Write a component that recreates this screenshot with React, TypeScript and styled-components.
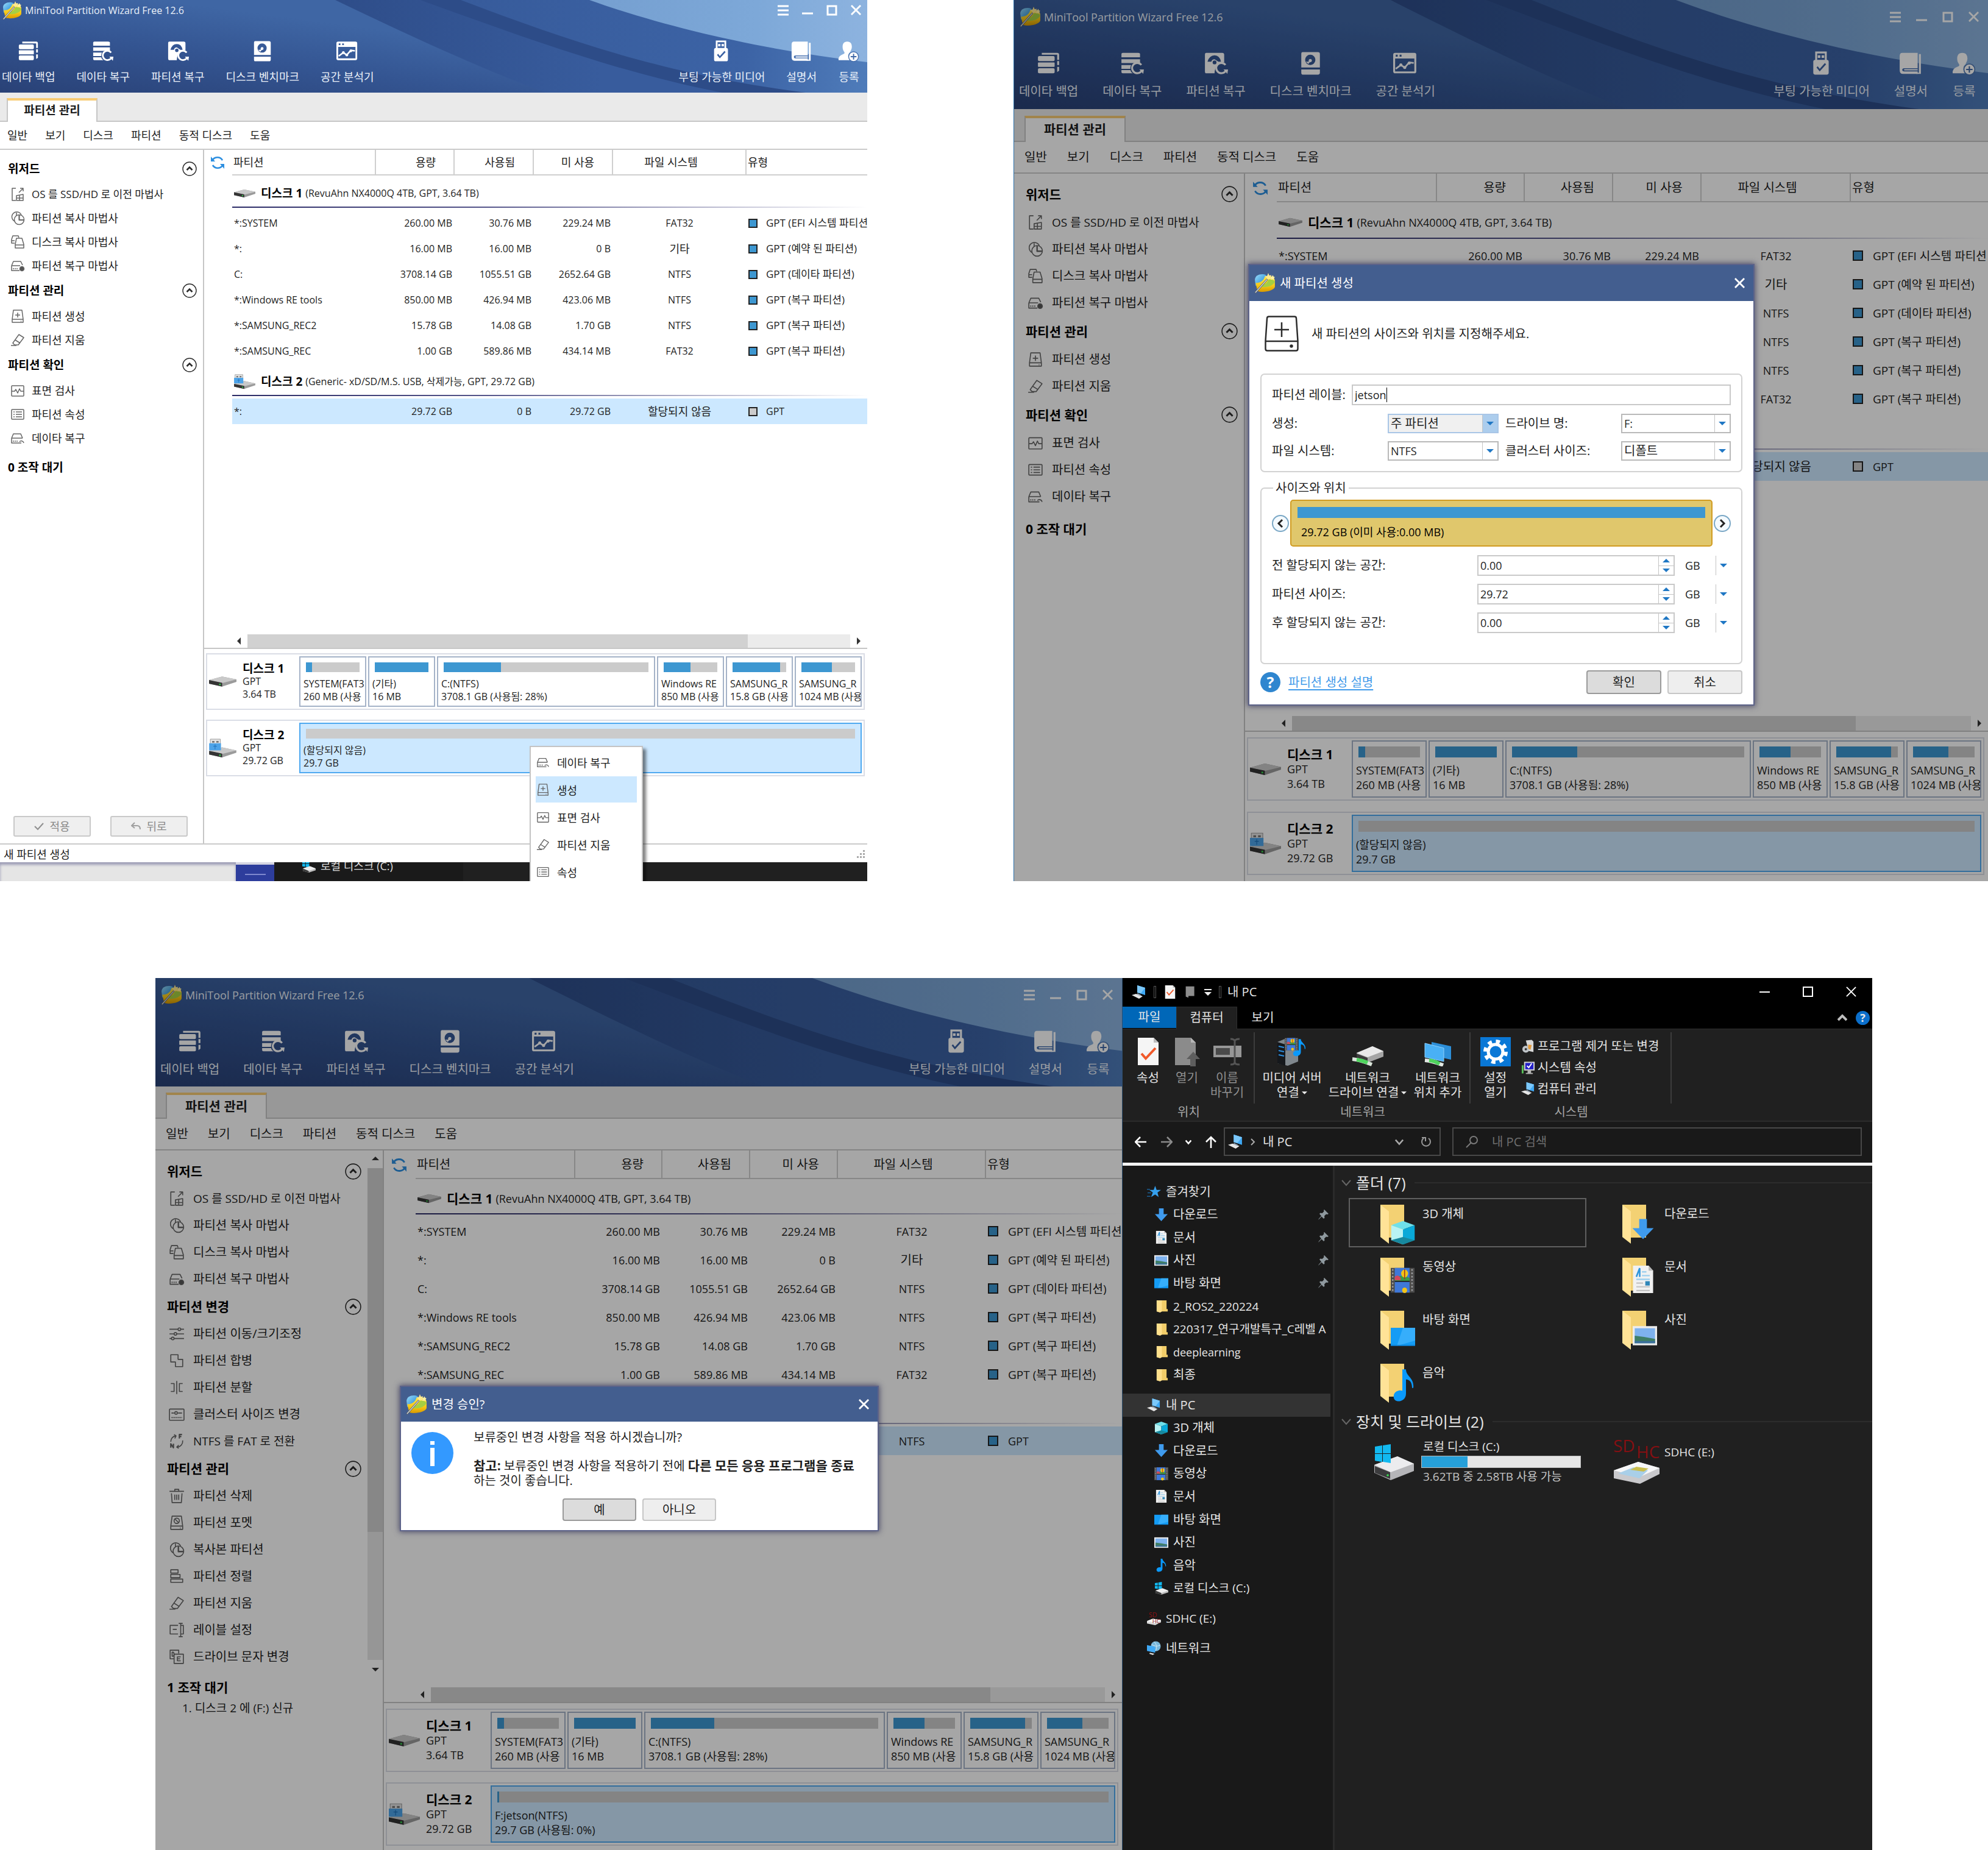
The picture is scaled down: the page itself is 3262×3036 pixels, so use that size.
import React from "react";
import styled, { createGlobalStyle, css, ThemeProvider } from "styled-components";

/* ------------------------------------------------------------------ */
/* Size scales for the partition windows                               */
/* ------------------------------------------------------------------ */

const compact = {
  latin: 16, mixed: 17, text: 18, strong: 19, line: 24,
  titleTop: 0, titleLeft: 4, titleH: 33, logo: 32, controlGap: 22, controlRight: 10,
  headerH: 152, toolsTop: 33, toolsLeft: 3, toolsRight: 12, toolIcon: 36, toolGap: 35, labelTop: 12,
  tabBarH: 48, tabH: 39, tabX: 11, tabW: 149,
  menuH: 46, menuX: 12, menuGap: 29,
  sideW: 335, sideTop: 9, headH: 44, itemH: 39, headX: 13, itemX: 17, itemIcon: 24, itemGap: 11, round: 24,
  pendingTop: 17,
  gutter: 46, thH: 42, groupH: 57, rowH: 42, driveW: 35, cols: [236, 129, 130, 130, 219], swatch: 15, swatchGap: 14,
  scrollH: 24, mapTop: 7, mapBottom: 110, mapRight: 4, mapGap: 16, boxH: 93, boxLabelW: 154, boxDrive: 45, boxLine: 21,
  cellW: 110, barH: 16,
};

const large = {
  ...compact,
  latin: 18, mixed: 19, text: 20, strong: 21, line: 26,
  titleTop: 9, titleLeft: 9, titleH: 37, logo: 35, controlGap: 25, controlRight: 15,
  headerH: 179, toolsTop: 38, toolsLeft: 8, toolsRight: 19, toolIcon: 40, toolGap: 40, labelTop: 13,
  tabBarH: 54, tabH: 43, tabX: 17, tabW: 166,
  menuH: 52, menuX: 17, menuGap: 33,
  sideW: 379, sideTop: 9, headH: 49, itemH: 44, headX: 19, itemX: 22, itemIcon: 26, itemGap: 14, round: 27,
  pendingTop: 18,
  gutter: 52, thH: 47, groupH: 64, rowH: 47, driveW: 39, cols: [263, 144, 145, 145, 245], swatch: 17, swatchGap: 16,
  scrollH: 26, mapTop: 9, mapBottom: 10, mapRight: 6, mapGap: 18, boxH: 104, boxLabelW: 173, boxDrive: 51, boxLine: 24,
  cellW: 123, barH: 18,
};

const largeScrolled = {
  ...large,
  headerH: 178, toolGap: 39, tabBarH: 53, menuGap: 32, sideW: 375, sideTop: 11, headH: 46, pendingTop: 5,
  cols: [262, 143, 144, 144, 243], groupH: 62, mapBottom: 7, mapGap: 17,
};

const Global = createGlobalStyle`
  * { box-sizing: border-box; }
  html, body { margin: 0; background: #fff; }
  body { font-family: "Open Sans", "Noto Sans CJK KR", sans-serif; color: #1e1e1e; }
  button, input, select { font: inherit; color: inherit; }
  button { padding: 0; border: 0; background: none; }
  svg { display: block; flex: none; }
`;

const Page = styled.main`
  min-height: 100vh;
  display: grid;
  grid-template-rows: minmax(0, 1446fr) minmax(0, 1431fr);
  row-gap: 159px;
  overflow: hidden;
`;
const TopRow = styled.div`
  display: grid;
  grid-template-columns: minmax(0, 1423fr) minmax(0, 1599fr);
  column-gap: 240px;
`;
const BottomRow = styled.div`
  display: grid;
  grid-template-columns: 255fr minmax(0, 1586fr) minmax(0, 1231fr) 190fr;
`;
const Shot = styled.section<{ $col?: number; $edge?: string }>`
  position: relative;
  display: flex;
  flex-direction: column;
  overflow: hidden;
  ${(p) => p.$col && css`grid-column: ${p.$col};`}
  ${(p) => p.$edge && css`border-left: 1px solid ${p.$edge};`}
`;

/* ------------------------------------------------------------------ */
/* Drawings                                                            */
/* ------------------------------------------------------------------ */

const Logo = ({ size }: { size: number }) => (
  <svg width={size} height={size} viewBox="0 0 32 32" aria-hidden="true">
    <defs>
      <linearGradient id="lgY" x1="0" y1="0" x2="0" y2="1"><stop offset="0" stopColor="#ffe34d" /><stop offset=".6" stopColor="#f6c716" /><stop offset="1" stopColor="#d99a00" /></linearGradient>
      <linearGradient id="lgB" x1="0" y1="0" x2="1" y2="1"><stop offset="0" stopColor="#9adcfb" /><stop offset="1" stopColor="#1580cf" /></linearGradient>
    </defs>
    <path d="M1 11C1 4 11 1 18 4L14 15 2 20Z" fill="url(#lgB)" />
    <path d="M2 16C9 16 14 13 16 6h9c4 1 6 4 6 7v9c-2 6-18 9-26 6Z" fill="url(#lgY)" />
    <path d="M11 19c6-1 9-4 10-8 5-1 9 1 10 3-2 6-12 9-19 8Z" fill="#a5cf42" />
    <path d="M21 1l1.500 3.500L26 4l-2 3.500 2 3-4-.8L19 12l0-3.500L16 6l3.500-1Z" fill="#ffe98f" />
    <path d="M28 4l1 2.500 2 .5-1.500 2 .3 2.500-2.300-1.200L25 11l.5-2.500L24 6.500l2.500-.3Z" fill="#fff0a0" />
    <path d="M2 30L19 11" stroke="#565b60" strokeWidth="2.600" strokeLinecap="round" />
    <path d="M2 30L19 11" stroke="#d3dade" strokeWidth="1.200" strokeLinecap="round" />
  </svg>
);

const Swoosh = styled.svg`
  position: absolute;
  inset: 0;
  width: 100%;
  height: 100%;
`;
const HeaderArt = () => (
  <Swoosh viewBox="0 0 1423 152" preserveAspectRatio="none" aria-hidden="true">
    <defs>
      <linearGradient id="hb" x1="0" y1="1" x2="1" y2=".2"><stop offset="0" stopColor="#294176" /><stop offset=".35" stopColor="#345592" /><stop offset=".6" stopColor="#3f66a4" /></linearGradient>
      <linearGradient id="hm" x1="0" y1="0" x2="1" y2="0"><stop offset="0" stopColor="#2e4d89" /><stop offset=".5" stopColor="#385c9d" /></linearGradient>
      <linearGradient id="hr" x1="0" y1="0" x2="1" y2="0"><stop offset="0" stopColor="#375b9b" /><stop offset=".7" stopColor="#3c63a5" /><stop offset="1" stopColor="#4f7cba" /></linearGradient>
      <linearGradient id="hs" x1="0" y1="0" x2="1" y2="0"><stop offset="0" stopColor="#759fd0" /><stop offset=".6" stopColor="#7da8d8" /><stop offset="1" stopColor="#8db3df" /></linearGradient>
    </defs>
    <rect width="1423" height="152" fill="url(#hb)" />
    <path d="M550 0C650 48 770 105 895 152H1423V0Z" fill="url(#hm)" />
    <path d="M690 0C850 58 1010 118 1185 152H1423V0Z" fill="#2d4c88" />
    <path d="M756 0C930 66 1090 122 1322 152H1423V0Z" fill="url(#hr)" />
    <path d="M967 0C1090 44 1250 82 1423 102V0Z" fill="url(#hs)" />
  </Swoosh>
);

const toolArt: Record<string, React.ReactNode> = {
  backup: (<g fill="#fff"><rect x="2" y="7" width="26" height="8" rx="2" /><rect x="2" y="17" width="26" height="7" rx="1" /><rect x="2" y="26" width="26" height="8" rx="2" /><path d="M8 2h24q3 0 3 3v8h-3V5H8Z" /><path d="M32 15h3v6h-3zM32 24h3v6l-3 2z" /></g>),
  restore: (<g fill="#fff"><path d="M4 2h24q3 0 3 2v5H2V4q0-2 2-2Z" /><path d="M2 12h29v6H2zM2 21h15a13 13 0 0 0-1 6H2z" /><path d="M2 29h14q1 4 4 5H4q-2 0-2-2z" /><path d="M33 21a8 8 0 1 0 1 8" fill="none" stroke="#fff" strokeWidth="3" /><path d="M30 28h7l-1 7z" /></g>),
  partition: (<g><path fill="#fff" fillRule="evenodd" d="M4 2h25q3 0 3 3v12q-14-1-15 17H4q-2 0-2-3V5q0-3 2-3ZM6 16h6q1-4 5-4l6 4h4Q25 6 17 6T6 16Zm8 1a3 3 0 1 0 6 0 3 3 0 1 0-6 0Z" /><path d="M34 21a8 8 0 1 0 1 8" fill="none" stroke="#fff" strokeWidth="3" /><path fill="#fff" d="M31 28h7l-1 7z" /></g>),
  bench: (<g><path fill="#fff" fillRule="evenodd" d="M6 1h24q3 0 3 3v21H4V4q0-3 2-3ZM18 5a8 8 0 1 0 0 16 8 8 0 1 0 0-16Z" /><path fill="#fff" d="M18 11.500a2.500 2.500 0 1 1 0 5q-1.500 0-3 3L11 16h4.500v-2.500q.5-2 2.500-2Z" /><path fill="#fff" d="M4 28h29v5q0 3-3 3H6q-2 0-2-3z" /></g>),
  space: (<g><path fill="#fff" fillRule="evenodd" d="M3 2h30q3 0 3 3v26q0 3-3 3H3q-3 0-3-3V5q0-3 3-3Zm0 9v20h30V11ZM4 5v3h3V5Zm6 0v3h3V5Z" /><path d="M4 27l8-6 6 4 7-8 7 1" fill="none" stroke="#fff" strokeWidth="2.600" /><circle cx="12" cy="21" r="2.400" fill="#fff" /><circle cx="18" cy="25" r="2.400" fill="#fff" /><circle cx="25" cy="18" r="2.400" fill="#fff" /></g>),
  media: (<g fill="#fff"><path fillRule="evenodd" d="M9 0h18v14H9Zm3 3v11h12V3Zm1 3h4v4h-4Zm6 0h4v4h-4Z" /><path fillRule="evenodd" d="M9 13h18q3 0 3 3v17q0 3-3 3H9q-3 0-3-3V16q0-3 3-3Zm2 12l5 6 10-11-2-2-8 9-3-4Z" /></g>),
  manual: (<g><path fill="#fff" fillRule="evenodd" d="M6 2h24v24H9q-3 0-3 2.500T9 31h21v4H7q-5 0-5-6V7q0-5 4-5Z" /><path fill="#fff" d="M9 27.500h21v2H9zM32 4h3v31h-7v-2h4z" /></g>),
  user: (<g><path fill="#fff" d="M16 2c6 0 8 4 8 9 0 4-2 6-3 9-3 2-4 6-3 9l2 5H1q-1-7 7-10c3-1 4-2 3-4-2-3-3-5-3-9 0-5 2-9 8-9Z" /><circle cx="27" cy="28" r="8.500" fill="#fff" stroke="#4b73b0" strokeWidth="1.500" /><path d="M27 23v10M22 28h10" stroke="#3f67a6" strokeWidth="2" /></g>),
};
const ToolIcon = ({ name, size }: { name: string; size: number }) => (
  <svg width={size} height={size} viewBox="0 0 38 37" aria-hidden="true">{toolArt[name]}</svg>
);

const lineArt: Record<string, React.ReactNode> = {
  migrate: (<><path d="M9 2H3v20h6" /><path d="M14 9l7-7M16 2h5v5" /><path d="M10 14l11-2v10H10zM15 13v9M10 18h11" /></>),
  pies: (<><path d="M7 17A8 8 0 1 1 18 7" /><path d="M10 3v5" /><circle cx="14.500" cy="14.500" r="8" /><path d="M14.500 7v8H22" strokeWidth="2.200" /></>),
  disks: (<><path d="M7 14H2V8l2-6h9l1 3" /><path d="M10 6h9l3 10v6H8v-6zM8 17h14" /><path d="M2 10h5" /></>),
  rescue: (<><path d="M2 12L5 5h12l3 6M2 12h14M2 12v8h13" /><path d="M5 16v2M8 16v2M11 16v2" /><circle cx="19" cy="17" r="3.500" fill="#555" /></>),
  create: (<><path d="M5 2h14l2 15v5H3v-5zM3 17h18" /><path d="M12 6v8M8 10h8M17 20h1" /></>),
  wipe: (<><path d="M14 3l8 5-9 12H7l-3-3z" /><path d="M8 12l8 5M1 21h9" /></>),
  surface: (<><rect x="2" y="4" width="20" height="17" rx="1" /><path d="M2 13h5l2-3 3 6 3-7 2 4h5" /></>),
  props: (<><rect x="2" y="4" width="20" height="16" rx="1" /><path d="M5 8h2M5 12h2M5 16h2M9 8h10M9 12h10M9 16h10" /></>),
  recover: (<><path d="M2 12L5 5h12l3 7M2 12h18M2 12v8h16M5 16v2M8 16v2M11 16v2" /><path d="M15 18a4 4 0 0 1 7 2" /></>),
  resize: (<><path d="M1 5h22M1 12h22M1 19h22" /><circle cx="16" cy="5" r="2" fill="#fff" /><circle cx="10" cy="12" r="2" fill="#fff" /><circle cx="6" cy="19" r="2" fill="#fff" /></>),
  merge: (<path d="M3 3h11v7h7v11H10v-7H3z" />),
  split: (<path d="M12 2v20M3 6h5v12H3M21 6h-5v12h5" />),
  cluster: (<><rect x="1" y="4" width="22" height="17" rx="1" /><path d="M4 10h4M14 10h6" /><path d="M4 17h16" strokeDasharray="2 1" /><circle cx="11" cy="10" r="2" /></>),
  convert: (<><path d="M3 13a9 9 0 0 1 7-9M8 2l3 2-2 4M21 11a9 9 0 0 1-8 10M15 18l-3 3 3 2" /><path d="M16 8V2h4M16 5h3M3 22v-6l4 6v-6" strokeWidth="2" /></>),
  trash: (<path d="M1 5h22M9 5V2h6v3M4 8l1 14h14l1-14M9 10v8M12 10v8M15 10v8" />),
  format: (<><path d="M5 2h14l2 15v5H3v-5zM3 17h18M17 20h1" /><circle cx="12" cy="9" r="4" /><path d="M9 6l6 6" /></>),
  align: (<path d="M3 2h11v5H3zM3 9h14v5H3zM3 16h18v5H3z" />),
  label: (<path d="M14 5H2v13h12M6 11h6M18 2v20M15 2h6M15 22h6M18 5h4v13h-4" />),
  letter: (<><path d="M8 15H2V2h13v5" /><path d="M8 8h14v14H8z" /><path d="M5 5v6h2q2-3 0-6zM18 12h-5v6h5M13 15h4" /></>),
};
const LineIcon = ({ name, size, color = "#666", weight = 1.5 }: { name: string; size: number; color?: string; weight?: number }) => (
  <svg width={size} height={size} viewBox="0 0 24 24" fill="none" stroke={color} strokeWidth={weight} strokeLinejoin="round" aria-hidden="true">
    {lineArt[name]}
  </svg>
);

const Drive = ({ width, usb }: { width: number; usb?: boolean }) => (
  <svg width={width} height={usb ? Math.round(width * 0.72) : Math.round(width * 0.42)} viewBox={usb ? "0 -14 46 33" : "0 0 46 19"} aria-hidden="true">
    <path d="M0 7L22 1 46 6V10L22 18 0 13Z" fill="#9b9b9b" />
    <path d="M0 7L22 1 46 6 22 12Z" fill="#c9c9c9" />
    <path d="M0 7L22 11.500V18L0 13Z" fill="#343434" />
    <rect x="17" y="13" width="2.500" height="2.500" fill="#35d04a" />
    {usb && (
      <g>
        <path d="M2-13h17v8H2z" fill="#e4e4e4" stroke="#999" />
        <path d="M5-10h4v3H5zM12-10h4v3h-4z" fill="#777" />
        <path d="M0-6h20V6H0z" fill="#4da3e8" />
        <path d="M10-4v8M7-1h6" stroke="#1d6fb8" />
      </g>
    )}
  </svg>
);

const Refresh = ({ size }: { size: number }) => (
  <svg width={size} height={size} viewBox="0 0 24 24" fill="none" stroke="#2d8fe0" strokeWidth="2.600" aria-hidden="true">
    <path d="M3 9a9.500 9.500 0 0 1 17-1M21 15a9.500 9.500 0 0 1-17 1" />
    <path d="M1 2v8h7zM23 22v-8h-7z" fill="#2d8fe0" stroke="none" />
  </svg>
);
const UpCircle = ({ size }: { size: number }) => (
  <svg width={size} height={size} viewBox="0 0 24 24" fill="none" stroke="#2b2b2b" aria-hidden="true">
    <circle cx="12" cy="12" r="11" strokeWidth="1.400" /><path d="M7.500 14L12 9.500l4.500 4.500" strokeWidth="2.600" />
  </svg>
);
const Tri = ({ dir, color = "#333", w = 12 }: { dir: "up" | "down" | "left" | "right"; color?: string; w?: number }) => {
  const d = { up: "M0 9L6 3l6 6z", down: "M0 3l6 6 6-6z", left: "M9 0L3 6l6 6z", right: "M3 0l6 6-6 6z" }[dir];
  return <svg width={w} height={w} viewBox="0 0 12 12" aria-hidden="true"><path d={d} fill={color} /></svg>;
};
const Cross = ({ size, color = "#fff", weight = 3 }: { size: number; color?: string; weight?: number }) => (
  <svg width={size} height={size} viewBox="0 0 18 18" stroke={color} strokeWidth={weight} aria-hidden="true"><path d="M1 1l16 16M17 1L1 17" /></svg>
);

/* ------------------------------------------------------------------ */
/* Partition window                                                    */
/* ------------------------------------------------------------------ */

const Window = styled.div<{ $dim?: boolean }>`
  position: relative;
  flex: 1;
  min-height: 0;
  display: flex;
  flex-direction: column;
  background: #fff;
  font-size: ${(p) => p.theme.text}px;
  line-height: ${(p) => p.theme.line}px;
  ${(p) => p.$dim && css`
    &::after { content: ""; position: absolute; inset: 0; background: rgba(0, 0, 0, 0.35); pointer-events: none; }
  `}
`;
const Header = styled.header`
  position: relative;
  height: ${(p) => p.theme.headerH}px;
  padding-top: ${(p) => p.theme.titleTop}px;
  background: #345592;
  color: #eaf0f8;
`;
const TitleRow = styled.div`
  position: relative;
  display: flex;
  align-items: center;
  gap: 5px;
  height: ${(p) => p.theme.titleH}px;
  padding: 0 ${(p) => p.theme.controlRight}px 0 ${(p) => p.theme.titleLeft}px;
`;
const AppTitle = styled.h1`
  flex: 1;
  margin: 0;
  font-size: ${(p) => p.theme.latin}px;
  font-weight: 400;
`;
const Controls = styled.div`
  display: flex;
  gap: ${(p) => p.theme.controlGap}px;
`;
const ToolRow = styled.nav`
  position: relative;
  display: flex;
  justify-content: space-between;
  padding: ${(p) => p.theme.toolsTop}px ${(p) => p.theme.toolsRight}px 0 ${(p) => p.theme.toolsLeft}px;
`;
const ToolGroup = styled.div`
  display: flex;
  gap: ${(p) => p.theme.toolGap}px;
`;
const Tool = styled.button`
  display: flex;
  flex-direction: column;
  align-items: center;
  gap: ${(p) => p.theme.labelTop}px;
  white-space: nowrap;
`;
const TabBar = styled.div`
  display: flex;
  align-items: flex-end;
  height: ${(p) => p.theme.tabBarH}px;
  padding-left: ${(p) => p.theme.tabX}px;
  background: #eaeaea;
  box-shadow: inset 0 -2px #c6c6c6;
`;
const Tab = styled.button`
  width: ${(p) => p.theme.tabW}px;
  height: ${(p) => p.theme.tabH}px;
  padding-bottom: 4px;
  border: 2px solid #c6c6c6;
  border-top: 4px solid #f8cb74;
  border-bottom: 0;
  background: #fff;
  font-size: ${(p) => p.theme.strong}px;
  font-weight: 700;
`;
const MenuBar = styled.nav`
  display: flex;
  align-items: center;
  gap: ${(p) => p.theme.menuGap}px;
  height: ${(p) => p.theme.menuH}px;
  padding-left: ${(p) => p.theme.menuX}px;
  border-bottom: 2px solid #cbcbcb;
`;
const Workspace = styled.div`
  flex: 1;
  min-height: 0;
  display: flex;
`;
const Sidebar = styled.aside`
  display: flex;
  flex-direction: column;
  width: ${(p) => p.theme.sideW}px;
  border-right: 2px solid #c6c6c6;
`;
const NavArea = styled.div`
  display: flex;
`;
const NavList = styled.div<{ $scroll?: boolean }>`
  flex: 1;
  padding: ${(p) => p.theme.sideTop}px 0 ${(p) => (p.$scroll ? 10 : 0)}px;
`;
const NavHead = styled.div`
  display: flex;
  align-items: center;
  justify-content: space-between;
  height: ${(p) => p.theme.headH}px;
  padding: 0 10px 0 ${(p) => p.theme.headX}px;
`;
const Strong = styled.h2`
  margin: 0;
  font-size: ${(p) => p.theme.strong}px;
  font-weight: 700;
  color: #000;
`;
const NavItem = styled.button<{ $mixed?: boolean }>`
  display: flex;
  align-items: center;
  gap: ${(p) => p.theme.itemGap}px;
  height: ${(p) => p.theme.itemH}px;
  padding-left: ${(p) => p.theme.itemX}px;
  font-size: ${(p) => (p.$mixed ? p.theme.mixed : p.theme.text)}px;
  white-space: nowrap;
`;
const VScroll = styled.div`
  display: flex;
  flex-direction: column;
  align-items: center;
  justify-content: space-between;
  gap: 10px;
  width: 25px;
  padding: 7px 0 5px;
`;
const VTrack = styled.div`
  flex: 1;
  width: 100%;
  background: #e6e6e6;
`;
const VThumb = styled.div`
  height: 74%;
  background: #d0d0d0;
`;
const Pending = styled.div`
  flex: 1;
  padding: ${(p) => p.theme.pendingTop}px 0 0 ${(p) => p.theme.headX}px;
`;
const PendingItem = styled.p`
  margin: 8px 0 0 25px;
  font-size: ${(p) => p.theme.mixed}px;
`;
const ActionRow = styled.div`
  display: flex;
  gap: 32px;
  padding: 0 0 11px 22px;
`;
const ActionButton = styled.button`
  display: flex;
  align-items: center;
  justify-content: center;
  gap: 9px;
  width: 127px;
  height: 34px;
  border: 2px solid #c9c9c9;
  border-radius: 3px;
  background: #efefef;
  color: #8a8a8a;
`;
const Main = styled.div`
  flex: 1;
  min-width: 0;
  display: flex;
  flex-direction: column;
`;
const TableArea = styled.div`
  flex: 1;
  display: flex;
  align-items: flex-start;
  overflow: hidden;
`;
const Gutter = styled.div`
  display: flex;
  align-items: center;
  justify-content: center;
  width: ${(p) => p.theme.gutter}px;
  height: ${(p) => p.theme.thH}px;
  padding-right: 3px;
`;
const Grid = styled.table`
  flex: 1;
  width: 0;
  table-layout: fixed;
  border-collapse: separate;
  border-spacing: 0;
  white-space: nowrap;
`;
const Th = styled.th<{ $align?: string }>`
  height: ${(p) => p.theme.thH}px;
  padding: 0 ${(p) => (p.$align ? 29 : 0)}px 0 2px;
  border-right: 2px solid #cfcfcf;
  border-bottom: 2px solid #cfcfcf;
  font-weight: 400;
  text-align: ${(p) => p.$align || "left"};
  &:last-child { border-right: 0; }
`;
const GroupCell = styled.td`
  height: ${(p) => p.theme.groupH}px;
  padding: 0 0 4px;
`;
const GroupTitle = styled.div`
  display: flex;
  align-items: center;
  gap: 5px;
  height: ${(p) => p.theme.groupH - 4}px;
  padding: 7px 0 0 3px;
  border-bottom: 2px solid;
  border-image: linear-gradient(90deg, #2b2b66, #55558a 40%, #fff) 1;
  font-size: ${(p) => p.theme.latin}px;
  b { margin-left: 4px; font-size: ${(p) => p.theme.strong}px; color: #000; }
`;
const Td = styled.td<{ $align?: string; $ko?: boolean; $mixed?: boolean }>`
  height: ${(p) => p.theme.rowH}px;
  padding: 0 4px 0 3px;
  overflow: hidden;
  font-size: ${(p) => (p.$ko ? p.theme.text : p.$mixed ? p.theme.mixed : p.theme.latin)}px;
  text-align: ${(p) => p.$align || "left"};
`;
const Row = styled.tr<{ $selected?: boolean }>`
  background: ${(p) => (p.$selected ? "#cce8ff" : "transparent")};
`;
const TypeCell = styled.div`
  display: flex;
  align-items: center;
  gap: ${(p) => p.theme.swatchGap}px;
`;
const Swatch = styled.span<{ $free?: boolean }>`
  flex: none;
  width: ${(p) => p.theme.swatch}px;
  height: ${(p) => p.theme.swatch}px;
  border: 2px solid #222;
  background: ${(p) => (p.$free ? "#cbcbcb" : "#3d97d1")};
`;
const HScroll = styled.div`
  display: flex;
  align-items: center;
  gap: 8px;
  height: ${(p) => p.theme.scrollH}px;
  padding: 0 8px 0 ${(p) => p.theme.gutter + 5}px;
  border-bottom: 2px solid #c6c6c6;
`;
const HTrack = styled.div`
  flex: 1;
  height: 100%;
  background: #ebebeb;
`;
const HThumb = styled.div`
  width: 83%;
  height: 100%;
  background: #d1d1d1;
`;
const DiskMap = styled.div`
  display: flex;
  flex-direction: column;
  gap: ${(p) => p.theme.mapGap}px;
  padding: ${(p) => p.theme.mapTop}px ${(p) => p.theme.mapRight}px ${(p) => p.theme.mapBottom}px 3px;
`;
const DiskBox = styled.div`
  display: flex;
  height: ${(p) => p.theme.boxH}px;
  padding: 3px 3px 3px 0;
  border: 2px solid #dadde6;
`;
const DiskLabel = styled.div`
  display: flex;
  align-items: center;
  gap: 10px;
  width: ${(p) => p.theme.boxLabelW - 3}px;
  padding-left: 3px;
  font-size: ${(p) => p.theme.latin}px;
  line-height: ${(p) => p.theme.boxLine}px;
  white-space: nowrap;
  b { display: block; font-size: ${(p) => p.theme.strong}px; color: #000; }
`;
const Cells = styled.div`
  flex: 1;
  min-width: 0;
  display: flex;
  gap: 3px;
`;
const Cell = styled.div<{ $wide?: boolean; $selected?: boolean }>`
  ${(p) => (p.$wide ? "flex: 1; min-width: 0;" : `width: ${p.theme.cellW}px;`)}
  overflow: hidden;
  padding: 8px 2px 0 5px;
  border: 2px solid ${(p) => (p.$selected ? "#4fa9f0" : "#a5b3c8")};
  background: ${(p) => (p.$selected ? "#cce8ff" : "#fff")};
  font-size: ${(p) => p.theme.latin}px;
  line-height: ${(p) => p.theme.boxLine}px;
  white-space: nowrap;
`;
const Bar = styled.div`
  height: ${(p) => p.theme.barH}px;
  margin: 0 7px 9px 4px;
  background: #cbcbcb;
`;
const Fill = styled.div`
  height: 100%;
  background: #3d97d1;
`;
const Status = styled.footer`
  display: flex;
  align-items: center;
  justify-content: space-between;
  height: 31px;
  padding: 2px 4px 0 6px;
  border-top: 2px solid #cbcbcb;
`;

type NavSection = { title: string; items: [string, string, boolean?][] };

const wizards: NavSection = {
  title: "위저드",
  items: [["migrate", "OS 를 SSD/HD 로 이전 마법사", true], ["pies", "파티션 복사 마법사"], ["disks", "디스크 복사 마법사"], ["rescue", "파티션 복구 마법사"]],
};
const shortNav: NavSection[] = [
  wizards,
  { title: "파티션 관리", items: [["create", "파티션 생성"], ["wipe", "파티션 지움"]] },
  { title: "파티션 확인", items: [["surface", "표면 검사"], ["props", "파티션 속성"], ["recover", "데이타 복구"]] },
];
const longNav: NavSection[] = [
  wizards,
  { title: "파티션 변경", items: [["resize", "파티션 이동/크기조정"], ["merge", "파티션 합병"], ["split", "파티션 분할"], ["cluster", "클러스터 사이즈 변경"], ["convert", "NTFS 를 FAT 로 전환", true]] },
  { title: "파티션 관리", items: [["trash", "파티션 삭제"], ["format", "파티션 포멧"], ["pies", "복사본 파티션"], ["align", "파티션 정렬"], ["wipe", "파티션 지움"], ["label", "레이블 설정"], ["letter", "드라이브 문자 변경"]] },
];

const partitions = [
  ["*:SYSTEM", "260.00 MB", "30.76 MB", "229.24 MB", "FAT32", "GPT (EFI 시스템 파티션"],
  ["*:", "16.00 MB", "16.00 MB", "0 B", "기타", "GPT (예약 된 파티션)"],
  ["C:", "3708.14 GB", "1055.51 GB", "2652.64 GB", "NTFS", "GPT (데이타 파티션)"],
  ["*:Windows RE tools", "850.00 MB", "426.94 MB", "423.06 MB", "NTFS", "GPT (복구 파티션)"],
  ["*:SAMSUNG_REC2", "15.78 GB", "14.08 GB", "1.70 GB", "NTFS", "GPT (복구 파티션)"],
  ["*:SAMSUNG_REC", "1.00 GB", "589.86 MB", "434.14 MB", "FAT32", "GPT (복구 파티션)"],
];
const cells = [
  { name: "SYSTEM(FAT3", info: "260 MB (사용", used: 11 },
  { name: "(기타)", info: "16 MB", used: 100 },
  { name: "C:(NTFS)", info: "3708.1 GB (사용됨: 28%)", used: 28, wide: true },
  { name: "Windows RE", info: "850 MB (사용", used: 50 },
  { name: "SAMSUNG_R", info: "15.8 GB (사용", used: 89 },
  { name: "SAMSUNG_R", info: "1024 MB (사용", used: 57 },
];

const isKorean = (s: string) => /[가-힣]/.test(s);

type WindowProps = {
  size: typeof compact;
  nav: NavSection[];
  pending: string;
  operations?: string[];
  dim?: boolean;
  scroll?: boolean;
  actions?: boolean;
  status?: string;
  target: string[];
  free?: boolean;
  targetCell: { name: string; info: string; used: number };
};

const PartitionRow = ({ row, selected, free }: { row: string[]; selected?: boolean; free?: boolean }) => (
  <Row $selected={selected}>
    <Td>{row[0]}</Td>
    <Td $align="right">{row[1]}</Td>
    <Td $align="right">{row[2]}</Td>
    <Td $align="right">{row[3]}</Td>
    <Td $align="center" $ko={isKorean(row[4])}>{row[4]}</Td>
    <Td $mixed={isKorean(row[5])}><TypeCell><Swatch $free={free} />{row[5]}</TypeCell></Td>
  </Row>
);

const MapCell = ({ cell, selected }: { cell: { name: string; info: string; used: number; wide?: boolean }; selected?: boolean }) => (
  <Cell $wide={cell.wide || selected} $selected={selected}>
    <Bar><Fill style={{ width: `${cell.used}%` }} /></Bar>
    <div>{cell.name}</div>
    <div>{cell.info}</div>
  </Cell>
);

const PartitionWindow = (p: WindowProps) => {
  const t = p.size;
  return (
    <ThemeProvider theme={t}>
      <Window $dim={p.dim}>
        <Header>
          <HeaderArt />
          <TitleRow>
            <Logo size={t.logo} />
            <AppTitle>MiniTool Partition Wizard Free 12.6</AppTitle>
            <Controls>
              <button aria-label="메뉴"><svg width="18" height="18" viewBox="0 0 18 18" stroke="#fff" strokeWidth="3"><path d="M0 2h18M0 9h18M0 16h18" /></svg></button>
              <button aria-label="최소화"><svg width="18" height="18" viewBox="0 0 18 18" stroke="#fff" strokeWidth="3"><path d="M0 14h18" /></svg></button>
              <button aria-label="최대화"><svg width="18" height="18" viewBox="0 0 18 18" fill="none" stroke="#fff" strokeWidth="3"><path d="M2 2h14v14H2z" /></svg></button>
              <button aria-label="닫기"><Cross size={17} /></button>
            </Controls>
          </TitleRow>
          <ToolRow>
            <ToolGroup>
              {[["backup", "데이타 백업"], ["restore", "데이타 복구"], ["partition", "파티션 복구"], ["bench", "디스크 벤치마크"], ["space", "공간 분석기"]].map(([icon, label]) => (
                <Tool key={icon}><ToolIcon name={icon} size={t.toolIcon} />{label}</Tool>
              ))}
            </ToolGroup>
            <ToolGroup>
              {[["media", "부팅 가능한 미디어"], ["manual", "설명서"], ["user", "등록"]].map(([icon, label]) => (
                <Tool key={icon}><ToolIcon name={icon} size={t.toolIcon} />{label}</Tool>
              ))}
            </ToolGroup>
          </ToolRow>
        </Header>
        <TabBar><Tab>파티션 관리</Tab></TabBar>
        <MenuBar>
          {["일반", "보기", "디스크", "파티션", "동적 디스크", "도움"].map((m) => <button key={m}>{m}</button>)}
        </MenuBar>
        <Workspace>
          <Sidebar>
            <NavArea>
              <NavList $scroll={p.scroll}>
                {p.nav.map((s) => (
                  <section key={s.title}>
                    <NavHead><Strong>{s.title}</Strong><button aria-label={s.title}><UpCircle size={t.round} /></button></NavHead>
                    {s.items.map(([icon, label, mixed]) => (
                      <NavItem key={label} $mixed={mixed}><LineIcon name={icon} size={t.itemIcon} />{label}</NavItem>
                    ))}
                  </section>
                ))}
              </NavList>
              {p.scroll && <VScroll><Tri dir="up" /><VTrack><VThumb /></VTrack><Tri dir="down" /></VScroll>}
            </NavArea>
            <Pending>
              <Strong>{p.pending}</Strong>
              {p.operations?.map((o) => <PendingItem key={o}>{o}</PendingItem>)}
            </Pending>
            {p.actions && (
              <ActionRow>
                <ActionButton disabled>
                  <svg width="16" height="14" viewBox="0 0 16 14" fill="none" stroke="#8f8f8f" strokeWidth="2"><path d="M1 7l5 5L15 2" /></svg>적용
                </ActionButton>
                <ActionButton disabled>
                  <svg width="16" height="14" viewBox="0 0 16 14" fill="none" stroke="#a0a0a0" strokeWidth="2"><path d="M6 1L1 6l5 4M1 6h9q5 0 5 6" /></svg>뒤로
                </ActionButton>
              </ActionRow>
            )}
          </Sidebar>
          <Main>
            <TableArea>
              <Gutter><button aria-label="새로 고침"><Refresh size={t.itemIcon} /></button></Gutter>
              <Grid>
                <colgroup>{t.cols.map((w, i) => <col key={i} style={{ width: w }} />)}<col /></colgroup>
                <thead>
                  <tr>
                    <Th>파티션</Th><Th $align="right">용량</Th><Th $align="right">사용됨</Th><Th $align="right">미 사용</Th><Th $align="center">파일 시스템</Th><Th>유형</Th>
                  </tr>
                </thead>
                <tbody>
                  <tr><GroupCell colSpan={6}><GroupTitle><Drive width={t.driveW} /><b>디스크 1</b>(RevuAhn NX4000Q 4TB, GPT, 3.64 TB)</GroupTitle></GroupCell></tr>
                  {partitions.map((row, i) => <PartitionRow key={i} row={row} />)}
                  <tr><GroupCell colSpan={6}><GroupTitle><Drive width={t.driveW} usb /><b>디스크 2</b>(Generic- xD/SD/M.S. USB, 삭제가능, GPT, 29.72 GB)</GroupTitle></GroupCell></tr>
                  <PartitionRow row={p.target} selected free={p.free} />
                </tbody>
              </Grid>
            </TableArea>
            <HScroll><Tri dir="left" /><HTrack><HThumb /></HTrack><Tri dir="right" /></HScroll>
            <DiskMap>
              <DiskBox>
                <DiskLabel><Drive width={t.boxDrive} /><div><b>디스크 1</b>GPT<br />3.64 TB</div></DiskLabel>
                <Cells>{cells.map((c, i) => <MapCell key={i} cell={c} />)}</Cells>
              </DiskBox>
              <DiskBox>
                <DiskLabel><Drive width={t.boxDrive} usb /><div><b>디스크 2</b>GPT<br />29.72 GB</div></DiskLabel>
                <Cells><MapCell cell={p.targetCell} selected /></Cells>
              </DiskBox>
            </DiskMap>
          </Main>
        </Workspace>
        {p.status && (
          <Status>
            {p.status}
            <svg width="14" height="14" viewBox="0 0 14 14" fill="#aaa"><path d="M11 0h3v3h-3zM11 5h3v3h-3zM11 10h3v3h-3zM6 5h3v3H6zM6 10h3v3H6zM1 10h3v3H1z" /></svg>
          </Status>
        )}
      </Window>
    </ThemeProvider>
  );
};

/* Context menu and the desktop strip under the first window */

const ContextMenu = styled.div`
  position: absolute;
  left: 869px;
  top: 1224px;
  width: 186px;
  padding: 1px 8px;
  border: 2px solid #c4c4c4;
  background: #fff;
  box-shadow: 5px 5px 5px rgba(0, 0, 0, 0.5);
`;
const ContextItem = styled.button<{ $active?: boolean }>`
  display: flex;
  align-items: center;
  gap: 12px;
  width: 100%;
  height: 43px;
  margin: 2px 0;
  padding-left: 1px;
  background: ${(p) => (p.$active ? "#cce8ff" : "none")};
  font-size: 18px;
`;
const Desktop = styled.div`
  display: flex;
  height: 31px;
  background: #202020;
  overflow: hidden;
`;
const DesktopLight = styled.div`
  width: 387px;
  background: #e5e5e5;
  box-shadow: inset 0 4px 4px #9a9ab4;
`;
const DesktopThumb = styled.div`
  width: 63px;
  padding: 15px 0 0 15px;
  border-top: 4px solid #d5d5e2;
  background: #2d3d9c;
  i { display: block; width: 34px; height: 2px; margin-bottom: 5px; background: #7f89cf; }
`;
const DesktopFolder = styled.div`
  display: flex;
  align-items: center;
  gap: 8px;
  height: 12px;
  padding-left: 45px;
  color: #dcdcdc;
  font-size: 18px;
  line-height: 12px;
`;
const DesktopPanel = styled.div`
  width: 310px;
  background: #1a1a1a;
`;

/* ------------------------------------------------------------------ */
/* Dialogs                                                             */
/* ------------------------------------------------------------------ */

const Dialog = styled.div<{ $x: number; $y: number; $w: number }>`
  position: absolute;
  left: ${(p) => p.$x}px;
  top: ${(p) => p.$y}px;
  width: ${(p) => p.$w}px;
  background: #fff;
  box-shadow: 0 0 0 2px #5d6389, 0 0 9px 3px rgba(40, 40, 80, 0.7);
  font-size: 20px;
  line-height: 26px;
`;
const DialogTitle = styled.div<{ $h: number }>`
  display: flex;
  align-items: center;
  gap: 7px;
  height: ${(p) => p.$h}px;
  padding: 0 14px 0 8px;
  background: #435e8f;
  color: #fff;
  span { flex: 1; }
`;
const DialogForm = styled.form`
  padding: 24px 18px 17px;
`;
const Intro = styled.div`
  display: flex;
  align-items: center;
  gap: 21px;
  margin-bottom: 36px;
  padding-left: 7px;
  line-height: 28px;
`;
const Box = styled.fieldset<{ $bottom: number; $top: number }>`
  min-width: 0;
  margin: 0;
  padding: ${(p) => p.$top}px 17px ${(p) => p.$bottom}px;
  border: 2px solid #d2d2d2;
  border-radius: 7px;
  & + & { margin-top: 13px; }
  legend { margin-left: 2px; padding: 0 4px; }
`;
const LabelLine = styled.div`
  display: flex;
  align-items: center;
  margin-bottom: 14px;
  label { width: 131px; white-space: nowrap; }
`;
const TextBox = styled.div`
  flex: 1;
  display: flex;
  align-items: center;
  height: 34px;
  padding-left: 3px;
  border: 2px solid #c9c9c9;
  font-size: 18px;
  input { field-sizing: content; padding: 0; border: 0; outline: 0; background: none; }
`;
const Caret = styled.span`
  width: 1px;
  height: 24px;
  background: #000;
`;
const Fields = styled.div`
  display: grid;
  grid-template-columns: 190px 182px 201px 1fr;
  row-gap: 13px;
  align-items: center;
  white-space: nowrap;
  label:nth-of-type(even) { padding-left: 11px; }
`;
const SelectBox = styled.div<{ $active?: boolean }>`
  display: flex;
  height: 32px;
  border: 2px solid ${(p) => (p.$active ? "#a9c6e6" : "#b9b9b9")};
  background: ${(p) => (p.$active ? "#f0f0f0" : "#fff")};
  select { flex: 1; min-width: 0; padding: 0 3px; border: 0; appearance: none; background: none; outline: 0; }
`;
const SelectArrow = styled.span<{ $active?: boolean }>`
  display: flex;
  align-items: center;
  justify-content: center;
  width: 25px;
  border-left: 1px solid #c4c4c4;
  background: ${(p) => (p.$active ? "#accded" : "none")};
`;
const SizeStrip = styled.div`
  display: flex;
  align-items: center;
  gap: 2px;
  margin-bottom: 14px;
`;
const RoundButton = styled.button`
  display: flex;
  align-items: center;
  justify-content: center;
  width: 28px;
  height: 28px;
  border: 2px solid #7ba8c6;
  border-radius: 50%;
  background: #f4faff;
`;
const SizeBar = styled.div`
  flex: 1;
  height: 77px;
  padding: 10px;
  border: 2px solid #d19c22;
  border-radius: 5px;
  background: #e0c76c;
  color: #000;
  font-size: 18px;
  line-height: 46px;
  p { margin: 0; padding-left: 6px; }
`;
const SizeFill = styled.div`
  height: 18px;
  background: #3d97d1;
`;
const SpinRow = styled.div`
  display: grid;
  grid-template-columns: 337px 324px 1fr;
  align-items: center;
  & + & { margin-top: 13px; }
`;
const SpinBox = styled.div`
  display: flex;
  height: 34px;
  border: 2px solid #c9c9c9;
  font-size: 18px;
  input { flex: 1; min-width: 0; padding: 0 3px; border: 0; outline: 0; background: none; }
`;
const SpinButtons = styled.div`
  display: grid;
  width: 25px;
  border-left: 1px solid #c4c4c4;
  button { display: flex; align-items: center; justify-content: center; }
  button + button { border-top: 1px solid #c4c4c4; }
`;
const UnitBox = styled.div`
  display: flex;
  height: 32px;
  padding-left: 17px;
  font-size: 18px;
  select { flex: 1; min-width: 0; padding: 0; border: 0; appearance: none; background: none; outline: 0; }
`;
const Footer = styled.div`
  display: flex;
  align-items: center;
  gap: 10px;
  margin-top: 10px;
`;
const HelpLink = styled.a`
  flex: 1;
  display: flex;
  align-items: center;
  gap: 13px;
  color: #3f9aea;
  text-decoration: none;
  span { text-decoration: underline; text-underline-offset: 4px; }
`;
const HelpMark = styled.i`
  width: 33px;
  height: 33px;
  border-radius: 50%;
  background: #2f86cf;
  color: #fff;
  font-size: 25px;
  font-style: normal;
  font-weight: 700;
  line-height: 33px;
  text-align: center;
`;
const PushButton = styled.button<{ $w: number; $h: number; $default?: boolean }>`
  width: ${(p) => p.$w}px;
  height: ${(p) => p.$h}px;
  border: 2px solid ${(p) => (p.$default ? "#9a9a9a" : "#c6c6c6")};
  border-radius: 4px;
  background: ${(p) => (p.$default ? "#dcdcdc" : "#eeeeee")};
`;
const Message = styled.div`
  display: flex;
  gap: 33px;
  padding: 14px 17px 0;
  line-height: 24px;
  p { margin: 0 0 23px; }
  p:last-child { margin-bottom: 17px; }
  b { font-size: 21px; line-height: 20px; }
`;
const InfoMark = styled.i`
  flex: none;
  width: 69px;
  height: 69px;
  margin-top: 3px;
  border-radius: 50%;
  background: #3399ff;
`;
const MessageButtons = styled.div`
  display: flex;
  justify-content: center;
  gap: 10px;
  padding: 0 0 15px;
`;

const Choice = ({ id, label, value, active }: { id: string; label: string; value: string; active?: boolean }) => (
  <>
    <label htmlFor={id}>{label}</label>
    <SelectBox $active={active}>
      <select id={id} style={{ fontSize: isKorean(value) ? 20 : 18 }}><option>{value}</option></select>
      <SelectArrow $active={active}><Tri dir="down" color="#1f77c4" /></SelectArrow>
    </SelectBox>
  </>
);

const CreateDialog = () => (
  <Dialog $x={386} $y={435} $w={827} role="dialog" aria-label="새 파티션 생성">
    <DialogTitle $h={59}><Logo size={35} /><span>새 파티션 생성</span><button aria-label="닫기"><Cross size={17} /></button></DialogTitle>
    <DialogForm>
      <Intro>
        <svg width="56" height="59" viewBox="0 0 56 59" fill="none" stroke="#2c2c2c" strokeWidth="2.500" aria-hidden="true">
          <path d="M7 1.500h42q3 0 3 3l2.500 37v13q0 3-3 3h-47q-3 0-3-3v-13L4 4.500q0-3 3-3ZM2 42h52" /><path d="M28 11v24M16 23h24" /><circle cx="44" cy="50" r="1.500" fill="#2c2c2c" />
        </svg>
        새 파티션의 사이즈와 위치를 지정해주세요.
      </Intro>
      <Box $top={16} $bottom={17}>
        <LabelLine>
          <label htmlFor="plabel">파티션 레이블:</label>
          <TextBox><input id="plabel" defaultValue="jetson" /><Caret /></TextBox>
        </LabelLine>
        <Fields>
          <Choice id="kind" label="생성:" value="주 파티션" active />
          <Choice id="letter" label="드라이브 명:" value="F:" />
          <Choice id="fs" label="파일 시스템:" value="NTFS" />
          <Choice id="cluster" label="클러스터 사이즈:" value="디폴트" />
        </Fields>
      </Box>
      <Box $top={6} $bottom={49}>
        <legend>사이즈와 위치</legend>
        <SizeStrip>
          <RoundButton type="button" aria-label="이전"><svg width="14" height="16" viewBox="0 0 14 16" fill="none" stroke="#222" strokeWidth="3"><path d="M10 2L4 8l6 6" /></svg></RoundButton>
          <SizeBar><SizeFill /><p>29.72 GB (이미 사용:0.00 MB)</p></SizeBar>
          <RoundButton type="button" aria-label="다음"><svg width="14" height="16" viewBox="0 0 14 16" fill="none" stroke="#222" strokeWidth="3"><path d="M4 2l6 6-6 6" /></svg></RoundButton>
        </SizeStrip>
        {[["before", "전 할당되지 않는 공간:", "0.00"], ["psize", "파티션 사이즈:", "29.72"], ["after", "후 할당되지 않는 공간:", "0.00"]].map(([id, label, value]) => (
          <SpinRow key={id}>
            <label htmlFor={id}>{label}</label>
            <SpinBox>
              <input id={id} defaultValue={value} />
              <SpinButtons>
                <button type="button" aria-label="증가"><Tri dir="up" color="#1f77c4" /></button>
                <button type="button" aria-label="감소"><Tri dir="down" color="#1f77c4" /></button>
              </SpinButtons>
            </SpinBox>
            <UnitBox><select aria-label="단위"><option>GB</option></select><SelectArrow><Tri dir="down" color="#1f77c4" /></SelectArrow></UnitBox>
          </SpinRow>
        ))}
      </Box>
      <Footer>
        <HelpLink href="#help"><HelpMark>?</HelpMark><span>파티션 생성 설명</span></HelpLink>
        <PushButton type="button" $w={123} $h={39} $default>확인</PushButton>
        <PushButton type="button" $w={123} $h={39}>취소</PushButton>
      </Footer>
    </DialogForm>
  </Dialog>
);

const ConfirmDialog = () => (
  <Dialog $x={403} $y={671} $w={782} role="dialog" aria-label="변경 승인?">
    <DialogTitle $h={57}><Logo size={35} /><span>변경 승인?</span><button aria-label="닫기"><Cross size={17} /></button></DialogTitle>
    <Message>
      <InfoMark><svg width="69" height="69" viewBox="0 0 69 69" fill="#fff" aria-hidden="true"><path d="M31 15h7v6h-7zM31 26h7v30h-7z" /></svg></InfoMark>
      <div>
        <p>보류중인 변경 사항을 적용 하시겠습니까?</p>
        <p><b>참고:</b> 보류중인 변경 사항을 적용하기 전에 <b>다른 모든 응용 프로그램을 종료</b><br />하는 것이 좋습니다.</p>
      </div>
    </Message>
    <MessageButtons>
      <PushButton $w={121} $h={37} $default>예</PushButton>
      <PushButton $w={121} $h={37}>아니오</PushButton>
    </MessageButtons>
  </Dialog>
);

/* ------------------------------------------------------------------ */
/* File explorer                                                       */
/* ------------------------------------------------------------------ */

const glyphs: Record<string, React.ReactNode> = {
  pc: (<><path d="M9 1l13 4v12L9 13z" fill="#3fa9f5" /><path d="M9 1l13 4-7 9-6-1z" fill="#7cc8fa" /><path d="M0 17l7-2 11 4-6 4z" fill="#e6e6e6" /><path d="M9 15l6 3" stroke="#9ab" strokeWidth="2" /></>),
  star: (<><path d="M14 2l2.500 7H24l-6 4.500 2 8-6-4.500-7 4.500 3-8L4 9h7.500z" fill="#35a0ee" /><path d="M0 8h5M1 14h6M0 20h6" stroke="#1b5f95" strokeWidth="1.500" /></>),
  down: (<path d="M8 1h8v10h7L12 23 1 11h7z" fill="#3f9bee" />),
  doc: (<><path d="M3 1h14l4 4v18H3z" fill="#f1f1f1" /><path d="M17 1v4h4z" fill="#b9b9b9" /><path d="M6 10l3-7v7" stroke="#2f96de" strokeWidth="1.400" fill="none" /><path d="M11 6h4M11 9h7M6 12h12" stroke="#9fd0ee" strokeWidth="1.200" /><path d="M6 15h6M6 18h12M6 21h12" stroke="#c2c2c2" /><path d="M14 13.500h4v3.500h-4z" fill="#2f86b8" /></>),
  pic: (<><path d="M0 3h24v18H0z" fill="#ececec" /><path d="M2 5h20v14H2z" fill="#7eb2ee" /><path d="M2 12q10 1 20 3v4H2z" fill="#3f7f67" /><path d="M2 17h20v2H2z" fill="#3b6f9c" /></>),
  desk: (<><path d="M0 4h24v17H0z" fill="#149cf5" /><path d="M12 4h12v12L6 21z" fill="#36aefb" /><path d="M0 20h24v1H0z" fill="#0d7fd0" /></>),
  folder: (<><path d="M5 2h16v15h2v4H5z" fill="#f2cd69" /><path d="M4 2h9v19l-3 2-6-2z" fill="#ffe08c" /></>),
  cube: (<><path d="M12 1l11 4-11 4L1 5z" fill="#6fe0ea" /><path d="M1 5l11 4v14L1 19z" fill="#b9f3f4" /><path d="M23 5l-11 4v14l11-4z" fill="#09a9d8" /><path d="M12 16l11 3-11 4-11-4z" fill="#17899f" /></>),
  film: (<><path d="M0 1h24v22H0z" fill="#4c4c4c" /><path d="M4 1h15v22H4z" fill="#3f78d8" /><path d="M4 10q7-4 15 0v3H4z" fill="#3b9a4a" /><path d="M4 9q3-3 6 1v2H4z" fill="#d2485c" /><circle cx="14" cy="6" r="3.500" fill="#f2c318" /><path d="M14 2v9" stroke="#a33a1d" /><circle cx="14" cy="21" r="2.500" fill="#f2c318" /><path d="M4 13h15" stroke="#222" /><path d="M2 2v21M21.500 2v21" stroke="#9c9c9c" strokeWidth="1.500" strokeDasharray="1.500 1.500" /></>),
  music: (<path d="M11 1h3c0 5 7 6 6 13h-1c0-4-2-6-5-6v10c0 6-9 7-10 3s4-6 7-5z" fill="#0a99fb" />),
  local: (<><path d="M1 3l5-.7V7H1zM7 2l6-1v6H7zM1 8h5v5l-5-.7zM7 8h6v6l-6-1z" fill="#12baf2" /><path d="M2 16l12-4 10 4v3l-12 4L2 20z" fill="#bdbdbd" /><path d="M2 16l12-4 10 4-12 4z" fill="#ededed" /><path d="M2 16l10 4v3L2 20z" fill="#3c3c3c" /></>),
  sdhc: (<><path d="M0 17l10-4 14 2v4l-10 5L0 21z" fill="#dcdcdc" /><path d="M0 17l10-4 14 2-10 5z" fill="#fafafa" /><text x="3" y="10" fontSize="11" fill="#8d0f12">SD</text><text x="9" y="21" fontSize="10" fill="#8d0f12">HC</text></>),
  net: (<><circle cx="15" cy="9" r="8.500" fill="#79b7d9" /><path d="M8 6q7 5 15 1M12 1q7 6 3 16" stroke="#cfe8f5" fill="none" /><path d="M0 7l14 3v10L0 17z" fill="#3fa9f5" /><path d="M5 20l8 2-3 2-6-2z" fill="#ddd" /></>),
  check: (<><path d="M3 0h14l4 4v20H3z" fill="#f5f5f5" /><path d="M17 0v4h4z" fill="#bbb" /><path d="M6 12l4 5 8-9" stroke="#f0592a" strokeWidth="2" fill="none" /></>),
  gray: (<path d="M3 2h16v18H8v3l-5-2z" fill="#8d8d8d" />),
};
const Glyph = ({ name, size = 23 }: { name: string; size?: number }) => (
  <svg width={size} height={size} viewBox="0 0 24 24" aria-hidden="true">{glyphs[name]}</svg>
);

/* place and size of the picture on the front of each big folder */
const folderFront: Record<string, [number, number, number, number]> = {
  cube: [17, 26, 42, 42], down: [16, 23, 38, 36], film: [18, 16, 39, 44], doc: [13, 12, 44, 49],
  desk: [18, 22, 40, 42], pic: [18, 21, 40, 42], music: [15, 8, 48, 56],
};
const FolderTile = ({ name }: { name: string }) => {
  const [x, y, w, h] = folderFront[name];
  return (
    <svg width="60" height="68" viewBox="0 0 60 68" aria-hidden="true">
      <path d="M1 1h39v54H14z" fill="#f3d173" /><path d="M1 1l14 11v53L1 54z" fill="#ffe397" />
      <svg x={x} y={y} width={w} height={h} viewBox="0 0 24 24" preserveAspectRatio="none">{glyphs[name]}</svg>
    </svg>
  );
};

const Explorer = styled.div`
  flex: 1;
  min-height: 0;
  display: flex;
  flex-direction: column;
  background: #191919;
  color: #e6e6e6;
  font-size: 20px;
  line-height: 24px;
`;
const ExTitle = styled.header`
  display: flex;
  align-items: center;
  height: 47px;
  padding: 0 26px 2px 15px;
  background: #000;
  span { flex: 1; margin-left: 10px; }
`;
const Divider = styled.i`
  width: 4px;
  height: 20px;
  border: 1px solid #555;
`;
const QuickItems = styled.div`
  display: flex;
  align-items: center;
  gap: 12px;
`;
const ExControls = styled.div`
  display: flex;
  gap: 54px;
`;
const ExTabs = styled.nav`
  display: flex;
  align-items: center;
  height: 37px;
  padding-right: 4px;
  border-bottom: 1px solid #2d2d2d;
  background: #000;
`;
const ExTab = styled.button<{ $kind?: string }>`
  align-self: ${(p) => (p.$kind === "file" ? "flex-start" : "stretch")};
  width: ${(p) => (p.$kind === "file" ? 88 : p.$kind === "open" ? 100 : 84)}px;
  height: ${(p) => (p.$kind === "file" ? 35 : 37)}px;
  padding-bottom: 2px;
  border: ${(p) => (p.$kind === "open" ? "1px solid #2d2d2d" : "0")};
  border-bottom: 0;
  background: ${(p) => (p.$kind === "file" ? "#0067b8" : p.$kind === "open" ? "#202020" : "none")};
`;
const ExTabEnd = styled.div`
  flex: 1;
  display: flex;
  justify-content: flex-end;
  align-items: center;
  gap: 14px;
`;
const ExHelp = styled.button`
  width: 23px;
  height: 23px;
  border-radius: 50%;
  background: #0b6fcb;
  font-size: 18px;
  font-weight: 700;
  line-height: 23px;
`;
const Ribbon = styled.div`
  display: flex;
  height: 152px;
  border-bottom: 2px solid #2b2b2b;
  background: #202020;
`;
const RibbonGroup = styled.div<{ $w: number }>`
  display: flex;
  flex-direction: column;
  align-items: center;
  justify-content: space-between;
  width: ${(p) => p.$w}px;
  padding: 10px 0 2px;
  background: linear-gradient(#3c3c3c, #3c3c3c) right 0 top 5px / 2px 117px no-repeat;
  > small { color: #a6a6a6; font-size: 20px; }
`;
const RibbonItems = styled.div<{ $shift?: boolean }>`
  display: flex;
  align-items: flex-start;
  padding-right: ${(p) => (p.$shift ? 14 : 2)}px;
`;
const RibbonButton = styled.button<{ $w: number; $off?: boolean }>`
  display: flex;
  flex-direction: column;
  align-items: center;
  gap: 7px;
  width: ${(p) => p.$w}px;
  color: ${(p) => (p.$off ? "#8f8f8f" : "#e6e6e6")};
  white-space: nowrap;
  svg { margin-top: 3px; }
  span { display: block; }
  span svg { display: inline-block; margin: 0 0 2px 4px; vertical-align: middle; }
`;
const RibbonList = styled.div`
  display: flex;
  flex-direction: column;
  margin-left: 8px;
  button { display: flex; align-items: center; gap: 4px; height: 35px; }
`;
const AddressBar = styled.div`
  display: flex;
  align-items: center;
  height: 67px;
  padding: 0 17px 2px 20px;
  gap: 19px;
`;
const NavArrows = styled.div`
  display: flex;
  align-items: center;
  justify-content: space-between;
  width: 135px;
  margin-right: -8px;
`;
const Address = styled.div`
  display: flex;
  align-items: center;
  gap: 12px;
  width: 356px;
  height: 47px;
  padding: 0 13px 0 5px;
  border: 2px solid #484848;
  span { flex: 1; }
`;
const Search = styled.label`
  flex: 1;
  display: flex;
  align-items: center;
  gap: 22px;
  height: 47px;
  padding-left: 20px;
  border: 2px solid #484848;
  input { flex: 1; min-width: 0; padding: 0; border: 0; outline: 0; background: none; font-size: 20px; }
  input::placeholder { color: #6f6f6f; opacity: 1; }
`;
const ExBody = styled.div`
  flex: 1;
  min-height: 0;
  display: flex;
  border-top: 5px solid #f4f4f4;
`;
const Tree = styled.aside`
  display: flex;
  flex-direction: column;
  gap: 12px;
  width: 348px;
  padding-top: 24px;
  border-right: 3px solid #2a2a2a;
`;
const TreeGroup = styled.div<{ $h: number }>`
  display: grid;
  grid-auto-rows: 1fr;
  min-height: ${(p) => p.$h}px;
`;
const TreeItem = styled.button<{ $deep?: boolean; $on?: boolean; $size: number }>`
  display: flex;
  align-items: center;
  gap: 8px;
  min-width: 0;
  margin-right: 4px;
  padding: 0 3px 0 ${(p) => (p.$deep ? 52 : 40)}px;
  background: ${(p) => (p.$on ? "#333" : "none")};
  font-size: ${(p) => p.$size}px;
  text-align: left;
  white-space: nowrap;
  overflow: hidden;
  span { flex: 1; }
`;
const Content = styled.div`
  flex: 1;
  min-width: 0;
  padding-top: 12px;
  background: #202020;
`;
const SectionHead = styled.h3`
  display: flex;
  align-items: center;
  gap: 8px;
  margin: 0;
  padding-left: 11px;
  font-size: 25px;
  font-weight: 400;
  line-height: 32px;
  &::after { content: ""; flex: 1; height: 2px; margin-left: 6px; background: #2c2c2c; }
`;
const Tiles = styled.div`
  display: grid;
  grid-template-columns: 390px 390px;
  gap: 6px 7px;
  padding: 9px 0 9px 23px;
`;
const Tile = styled.button<{ $on?: boolean }>`
  display: flex;
  gap: 10px;
  height: 81px;
  padding: 8px 0 0 49px;
  border: 2px solid ${(p) => (p.$on ? "#5f5f5f" : "transparent")};
  text-align: left;
  span { padding-top: 4px; }
`;
const Device = styled.div<{ $tight?: boolean }>`
  display: flex;
  align-items: ${(p) => (p.$tight ? "flex-start" : "center")};
  gap: ${(p) => (p.$tight ? 7 : 14)}px;
  height: 81px;
  padding-left: ${(p) => (p.$tight ? 37 : 41)}px;
  color: #e6e6e6;
`;
const DeviceName = styled.div<{ $tight?: boolean }>`
  font-size: 19px;
  padding-top: ${(p) => (p.$tight ? 13 : 0)}px;
`;
const Meter = styled.div`
  width: 262px;
  height: 20px;
  margin: 3px 0 2px -3px;
  border: 1px solid #bcbcbc;
  background: #e6e6e6;
`;
const MeterFill = styled.div`
  height: 100%;
  background: #26a0da;
`;
const Free = styled.div`
  color: #c4c4c4;
`;

const Chevron = ({ w = 16, color = "#777", weight = 2 }: { w?: number; color?: string; weight?: number }) => (
  <svg width={w} height={w} viewBox="0 0 16 16" fill="none" stroke={color} strokeWidth={weight} aria-hidden="true"><path d="M1 4l7 8 7-8" /></svg>
);
const Pin = () => (
  <svg width="17" height="17" viewBox="0 0 17 17" fill="#8f999f" aria-hidden="true"><path d="M10 0l7 7-2 1-2-.5-3 3 .5 3L9 15 5.500 11.500 1 16l-1 1 1-2 4-4.500L2 7l1.500-1.500 3 .5 3-3-.5-2z" /></svg>
);
const Arrow = ({ d, color = "#fff" }: { d: string; color?: string }) => (
  <svg width="20" height="20" viewBox="0 0 20 20" fill="none" stroke={color} strokeWidth="2.600" aria-hidden="true"><path d={d} /></svg>
);

const quick: [string, string, boolean?][] = [
  ["down", "다운로드", true], ["doc", "문서", true], ["pic", "사진", true], ["desk", "바탕 화면", true],
  ["folder", "2_ROS2_220224"], ["folder", "220317_연구개발특구_C레벨 A"], ["folder", "deeplearning"], ["folder", "최종"],
];
const pcItems = [["cube", "3D 개체"], ["down", "다운로드"], ["film", "동영상"], ["doc", "문서"], ["desk", "바탕 화면"], ["pic", "사진"], ["music", "음악"], ["local", "로컬 디스크 (C:)"]];
const sizeOf = (s: string) => {
  if (!isKorean(s)) return /[A-Z]/.test(s) ? 19 : 18;
  return /[A-Z0-9]/.test(s) && s.length > 6 ? 19 : 20;
};

const ExplorerWindow = () => (
  <Explorer>
    <ExTitle>
      <QuickItems>
        <Glyph name="pc" size={24} /><Divider /><Glyph name="check" size={22} /><Glyph name="gray" size={21} />
        <svg width="12" height="14" viewBox="0 0 12 14" fill="#eee"><path d="M0 2h12v2H0zM0 7h12l-6 6z" /></svg><Divider />
      </QuickItems>
      <span>내 PC</span>
      <ExControls>
        <button aria-label="최소화"><svg width="17" height="17" viewBox="0 0 17 17" stroke="#fff" strokeWidth="2"><path d="M0 9h17" /></svg></button>
        <button aria-label="최대화"><svg width="17" height="17" viewBox="0 0 17 17" fill="none" stroke="#fff" strokeWidth="2"><path d="M1 1h15v15H1z" /></svg></button>
        <button aria-label="닫기"><Cross size={17} weight={2} /></button>
      </ExControls>
    </ExTitle>
    <ExTabs>
      <ExTab $kind="file">파일</ExTab><ExTab $kind="open">컴퓨터</ExTab><ExTab>보기</ExTab>
      <ExTabEnd>
        <button aria-label="리본 접기"><svg width="16" height="12" viewBox="0 0 16 12" fill="none" stroke="#bdbdbd" strokeWidth="4"><path d="M1 10l7-7 7 7" /></svg></button>
        <ExHelp>?</ExHelp>
      </ExTabEnd>
    </ExTabs>
    <Ribbon>
      <RibbonGroup $w={217}>
        <RibbonItems>
          <RibbonButton $w={62}>
            <svg width="36" height="48" viewBox="0 0 36 48"><path d="M1 1h26l8 8v37H1z" fill="#f5f5f5" /><path d="M27 1v8h8z" fill="#bdbdbd" /><path d="M7 27l7 8 16-17" fill="none" stroke="#f0592a" strokeWidth="4" /></svg>
            <span>속성</span>
          </RibbonButton>
          <RibbonButton $w={66} $off>
            <svg width="42" height="48" viewBox="0 0 42 48"><path d="M1 1h26l8 8v37H1z" fill="#8b8b8b" /><path d="M27 1v8h8z" fill="#b5b5b5" /><path d="M31 24l11 12h-7v12h-9V36h-6z" fill="#5e5e5e" /></svg>
            <span>열기</span>
          </RibbonButton>
          <RibbonButton $w={66} $off>
            <svg width="46" height="48" viewBox="0 0 46 48"><path d="M0 14h46v19H0z" fill="#979797" /><path d="M4 18h23v11H4z" fill="#4a4a4a" /><path d="M28 3q7 0 7 4v34q0 4-7 4M43 3q-8 0-8 4v34q0 4 8 4" fill="none" stroke="#555" strokeWidth="3" /></svg>
            <span>이름<br />바꾸기</span>
          </RibbonButton>
        </RibbonItems>
        <small>위치</small>
      </RibbonGroup>
      <RibbonGroup $w={354}>
        <RibbonItems>
          <RibbonButton $w={116}>
            <svg width="50" height="48" viewBox="0 0 50 48"><path d="M1 8l12-5 22 5v32l-17 7L1 43z" fill="#7f878d" /><path d="M1 8l13 4v35L1 43z" fill="#15181c" /><path d="M3 15l9 2M3 22l9 2M3 29l9 2" stroke="#2c8fe0" strokeWidth="2" /><svg x="13" y="0" width="22" height="23" viewBox="0 0 24 24">{glyphs.film}</svg><svg x="22" y="0" width="30" height="34" viewBox="0 0 24 24">{glyphs.music}</svg></svg>
            <span>미디어 서버<br />연결<Tri dir="down" color="#eee" w={9} /></span>
          </RibbonButton>
          <RibbonButton $w={132}>
            <svg width="52" height="48" viewBox="0 0 52 48"><path d="M8 26L34 15l18 8v9L26 42 8 35z" fill="#a5a5a5" /><path d="M8 26L34 15l18 8-26 10z" fill="#e9e9e9" /><path d="M8 27l18 7v7L8 35z" fill="#3c3c3c" /><path d="M1 36q12 1 32 9" stroke="#d9e4d9" strokeWidth="6" fill="none" /><path d="M8 37q9 1 18 5" stroke="#4fd45e" strokeWidth="6" fill="none" /></svg>
            <span>네트워크<br />드라이브 연결<Tri dir="down" color="#eee" w={9} /></span>
          </RibbonButton>
          <RibbonButton $w={98}>
            <svg width="46" height="48" viewBox="0 0 46 48"><path d="M13 8l32 7v22l-32-7z" fill="#2d8fd8" /><path d="M2 10l31 8v22L2 33z" fill="#49b0f5" stroke="#8fd0fb" /><path d="M2 38q12 1 30 8" stroke="#e3e8e3" strokeWidth="6" fill="none" /><path d="M9 38q9 1 17 6" stroke="#4fd45e" strokeWidth="6" fill="none" /></svg>
            <span>네트워크<br />위치 추가</span>
          </RibbonButton>
        </RibbonItems>
        <small>네트워크</small>
      </RibbonGroup>
      <RibbonGroup $w={330}>
        <RibbonItems $shift>
          <RibbonButton $w={68}>
            <svg width="50" height="48" viewBox="0 0 50 48"><path d="M0 0h50v48H0z" fill="#0a78d6" /><circle cx="25" cy="24" r="12" fill="none" stroke="#fff" strokeWidth="5" /><circle cx="25" cy="24" r="17" fill="none" stroke="#fff" strokeWidth="6" strokeDasharray="6.700 6.650" /></svg>
            <span>설정<br />열기</span>
          </RibbonButton>
          <RibbonList>
            <button><svg width="23" height="24" viewBox="0 0 24 24"><path d="M8 2l10-1 3 3v18l-8-2z" fill="#d9d9d9" /><circle cx="8" cy="17" r="6" fill="#bfc4c8" /><circle cx="8" cy="17" r="2" fill="#333" /><path d="M12 9l6 1-2 8-4-2z" fill="#e39a3a" /></svg>프로그램 제거 또는 변경</button>
            <button><svg width="23" height="24" viewBox="0 0 24 24"><path d="M5 2h18v15H5z" fill="#d7d7d7" /><path d="M7 4h14v11H7z" fill="#2420c8" /><path d="M10 9l3 3 5-7" stroke="#fff" strokeWidth="2" fill="none" /><path d="M11 17h6v4h3v2H8v-2h3z" fill="#b5b5b5" /><path d="M1 8h3v14H1z" fill="#5ac05a" /></svg>시스템 속성</button>
            <button><Glyph name="pc" />컴퓨터 관리</button>
          </RibbonList>
        </RibbonItems>
        <small>시스템</small>
      </RibbonGroup>
    </Ribbon>
    <AddressBar>
      <NavArrows>
        <button aria-label="뒤로"><Arrow d="M19 10H2M9 2l-8 8 8 8" /></button>
        <button aria-label="앞으로"><Arrow d="M1 10h17M11 2l8 8-8 8" color="#8a8a8a" /></button>
        <button aria-label="최근 위치"><Chevron w={10} color="#fff" weight={4} /></button>
        <button aria-label="위로"><Arrow d="M10 20V2M2 10l8-8 8 8" /></button>
      </NavArrows>
      <Address>
        <Glyph name="pc" size={25} />
        <svg width="8" height="12" viewBox="0 0 8 12" fill="none" stroke="#aaa" strokeWidth="2"><path d="M1 1l5 5-5 5" /></svg>
        <span>내 PC</span>
        <button aria-label="이전 위치"><Chevron w={14} color="#aaa" weight={3} /></button>
        <Divider style={{ border: 0 }} />
        <button aria-label="새로 고침"><svg width="18" height="18" viewBox="0 0 18 18" fill="none" stroke="#9a9a9a" strokeWidth="2"><path d="M13 3a7 7 0 1 1-8 0M2 2h6v6" /></svg></button>
      </Address>
      <Search>
        <svg width="21" height="21" viewBox="0 0 21 21" fill="none" stroke="#7a7a7a" strokeWidth="2"><circle cx="13" cy="8" r="6" /><path d="M9 12l-8 8" /></svg>
        <input aria-label="내 PC 검색" placeholder="내 PC 검색" />
      </Search>
    </AddressBar>
    <ExBody>
      <Tree>
        <TreeGroup $h={338}>
          <TreeItem $size={20}><Glyph name="star" /><span>즐겨찾기</span></TreeItem>
          {quick.map(([icon, label, pinned]) => (
            <TreeItem key={label} $deep $size={sizeOf(label)}><Glyph name={icon} /><span>{label}</span>{pinned && <Pin />}</TreeItem>
          ))}
        </TreeGroup>
        <TreeGroup $h={338}>
          <TreeItem $on $size={20}><Glyph name="pc" /><span>내 PC</span></TreeItem>
          {pcItems.map(([icon, label]) => (
            <TreeItem key={label} $deep $size={sizeOf(label)}><Glyph name={icon} /><span>{label}</span></TreeItem>
          ))}
        </TreeGroup>
        <TreeGroup $h={37}><TreeItem $size={19}><Glyph name="sdhc" /><span>SDHC (E:)</span></TreeItem></TreeGroup>
        <TreeGroup $h={37}><TreeItem $size={20}><Glyph name="net" /><span>네트워크</span></TreeItem></TreeGroup>
      </Tree>
      <Content>
        <SectionHead><Chevron color="#666" />폴더 (7)</SectionHead>
        <Tiles>
          {[["cube", "3D 개체"], ["down", "다운로드"], ["film", "동영상"], ["doc", "문서"], ["desk", "바탕 화면"], ["pic", "사진"], ["music", "음악"]].map(([icon, label], i) => (
            <Tile key={label} $on={i === 0}><FolderTile name={icon} /><span>{label}</span></Tile>
          ))}
        </Tiles>
        <SectionHead><Chevron color="#666" />장치 및 드라이브 (2)</SectionHead>
        <Tiles>
          <Device>
            <svg width="67" height="60" viewBox="0 0 67 60" aria-hidden="true"><path d="M2 5l12-2v13H2zM15 3l13-2v15H15zM2 17h12v13L2 28zM15 17h13v15l-13-2z" fill="#12b9f0" /><path d="M1 35l38-14 27 12v12L28 60 1 48z" fill="#b5b5b8" /><path d="M1 35l38-14 27 12-38 14z" fill="#ececee" /><path d="M2 37l25 10v11L2 48z" fill="#3b3b3d" /><path d="M2 17h12v13L2 28zM15 17h13v15l-13-2z" fill="#12b9f0" /><circle cx="23" cy="52" r="1.800" fill="#3be052" /></svg>
            <DeviceName>
              로컬 디스크 (C:)
              <Meter><MeterFill style={{ width: "29%" }} /></Meter>
              <Free>3.62TB 중 2.58TB 사용 가능</Free>
            </DeviceName>
          </Device>
          <Device $tight>
            <svg width="77" height="78" viewBox="0 0 77 78" aria-hidden="true"><path d="M1 55l40-14 35 10v10L44 77 1 68z" fill="#c9c9cc" /><path d="M1 55l40-14 35 10-33 15z" fill="#f7f7f8" /><path d="M8 60l25-10 24 5-14 13z" fill="#a9cfe8" /><path d="M28 54l10-5 20 3-8 5z" fill="#c9bd4d" /><text x="0" y="25" fontSize="28" fill="#840f12">SD</text><text x="38" y="35" fontSize="28" fill="#840f12">HC</text></svg>
            <DeviceName $tight>SDHC (E:)</DeviceName>
          </Device>
        </Tiles>
      </Content>
    </ExBody>
  </Explorer>
);

/* ------------------------------------------------------------------ */

export default function App() {
  return (
    <>
      <Global />
      <Page>
        <TopRow>
          <Shot>
            <PartitionWindow
              size={compact} nav={shortNav} pending="0 조작 대기" actions status="새 파티션 생성"
              target={["*:", "29.72 GB", "0 B", "29.72 GB", "할당되지 않음", "GPT"]} free
              targetCell={{ name: "(할당되지 않음)", info: "29.7 GB", used: 0 }}
            />
            <Desktop>
              <DesktopLight />
              <DesktopThumb><i /></DesktopThumb>
              <DesktopPanel><DesktopFolder><Glyph name="local" /><span>로컬 디스크 (C:)</span></DesktopFolder></DesktopPanel>
            </Desktop>
            <ContextMenu role="menu">
              {[["recover", "데이타 복구"], ["create", "생성"], ["surface", "표면 검사"], ["wipe", "파티션 지움"], ["props", "속성"]].map(([icon, label]) => (
                <ContextItem key={label} role="menuitem" $active={icon === "create"}><LineIcon name={icon} size={22} />{label}</ContextItem>
              ))}
            </ContextMenu>
          </Shot>
          <Shot $edge="#2a6fa8">
            <PartitionWindow
              dim size={large} nav={shortNav} pending="0 조작 대기"
              target={["*:", "29.72 GB", "0 B", "29.72 GB", "할당되지 않음", "GPT"]} free
              targetCell={{ name: "(할당되지 않음)", info: "29.7 GB", used: 0 }}
            />
            <CreateDialog />
          </Shot>
        </TopRow>
        <BottomRow>
          <Shot $col={2}>
            <PartitionWindow
              dim scroll size={largeScrolled} nav={longNav} pending="1 조작 대기" operations={["1. 디스크 2 에 (F:) 신규"]}
              target={["F:jetson", "29.72 GB", "0 B", "29.72 GB", "NTFS", "GPT"]}
              targetCell={{ name: "F:jetson(NTFS)", info: "29.7 GB (사용됨: 0%)", used: 0.3 }}
            />
            <ConfirmDialog />
          </Shot>
          <Shot $col={3} $edge="#2c4f70"><ExplorerWindow /></Shot>
        </BottomRow>
      </Page>
    </>
  );
}
